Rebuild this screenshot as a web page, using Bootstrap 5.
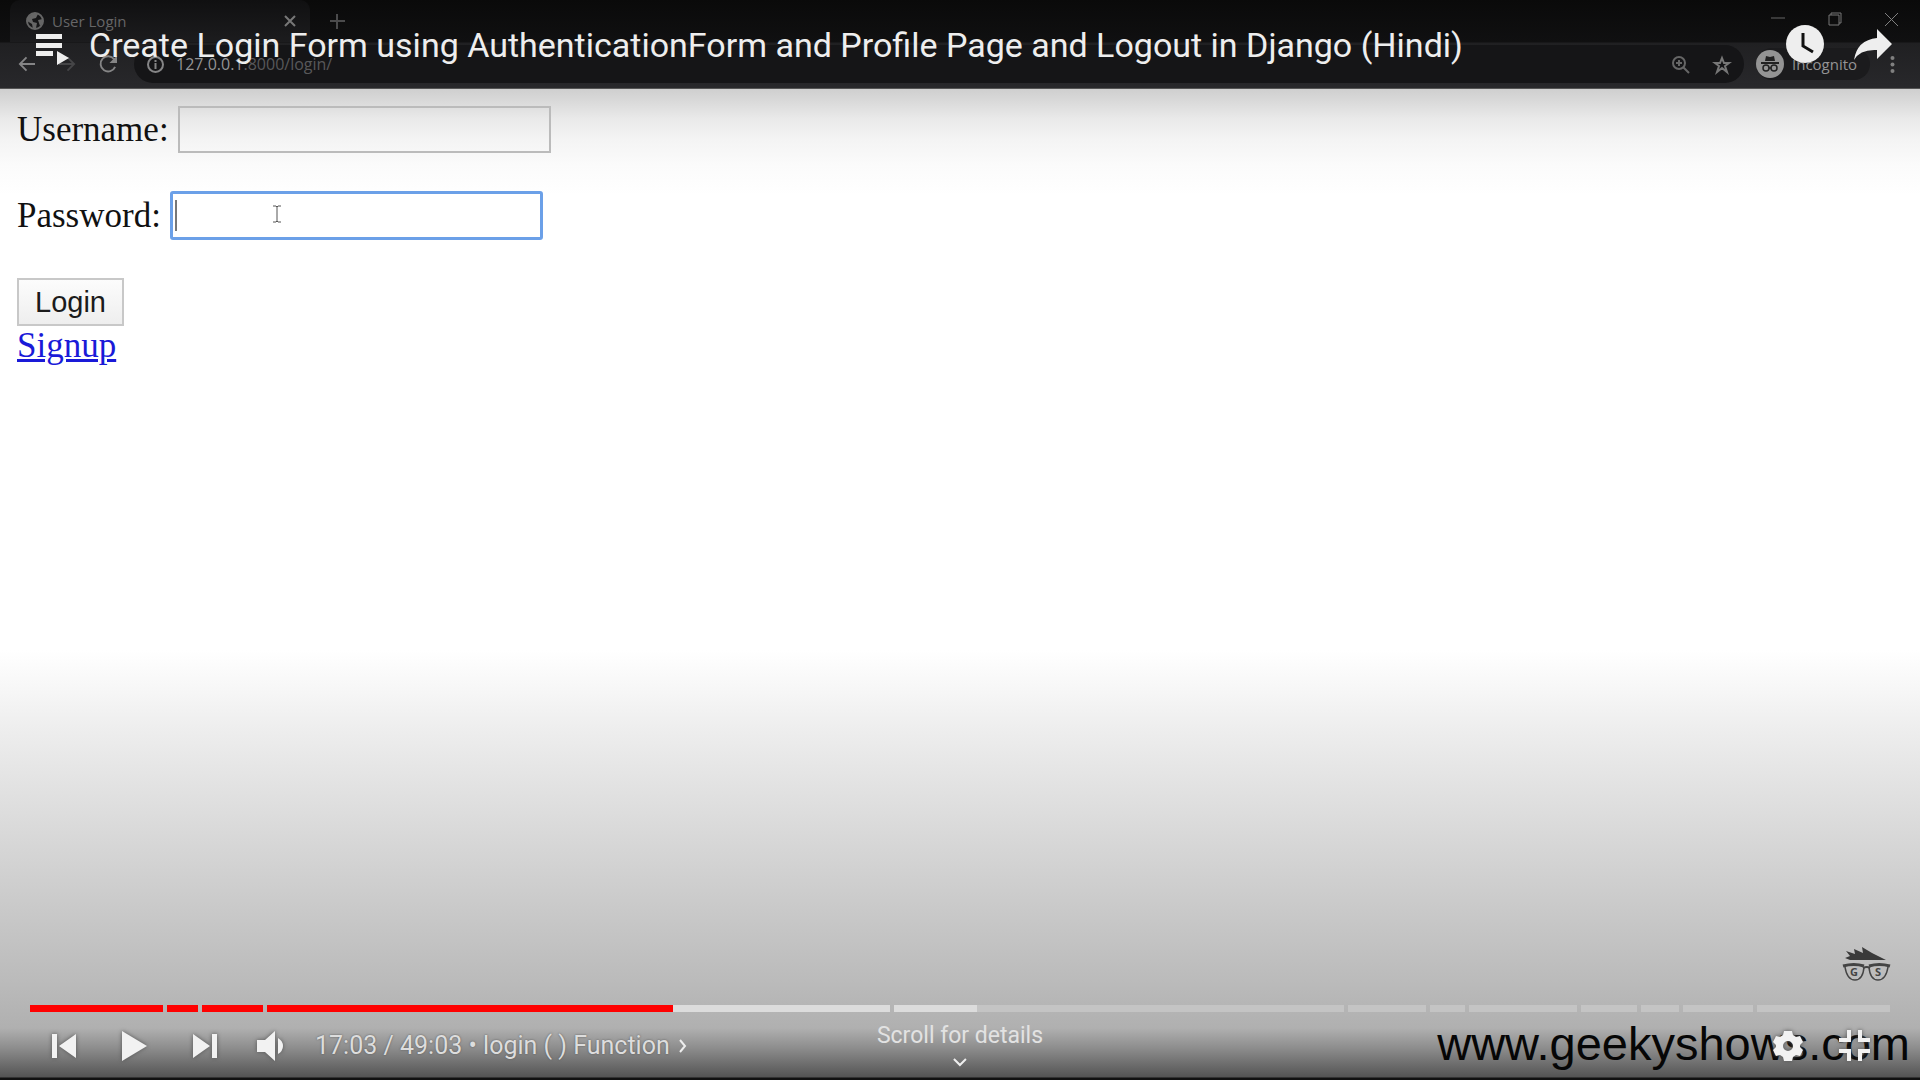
<!DOCTYPE html>
<html lang="en">
<head>
<meta charset="utf-8">
<meta name="viewport" content="width=device-width, initial-scale=1">
<title>Create Login Form using AuthenticationForm</title>
<link href="https://cdn.jsdelivr.net/npm/bootstrap@5.3.0/dist/css/bootstrap.min.css" rel="stylesheet">
<style>
  body { font-family: Roboto, "Liberation Sans", sans-serif; }
  svg { display: block; overflow: visible; }
  button.plain { background: none; border: 0; padding: 0; color: inherit; }

  /* video frame, dimmed at both ends */
  .frame {
    background: linear-gradient(#cecece 88px, #dadada 102px, #e9e9e9 118px, #f4f4f4 140px, #fbfbfb 165px, #fff 195px,
      #fff calc(100vh - 430px), #f6f6f6 calc(100vh - 387px), #eee calc(100vh - 353px), #e4e4e4 calc(100vh - 303px),
      #dadada calc(100vh - 253px), #c9c9c9 calc(100vh - 170px), #bbb calc(100vh - 100px), #b0b0b0 calc(100vh - 52px),
      #8d8d8d calc(100vh - 32px), #545454 calc(100vh - 3px), #111 calc(100vh - 2px));
  }

  /* browser window */
  .chrome { font-family: "Open Sans", "Noto Sans", sans-serif; background: linear-gradient(#0a0a0a, #101011 42px, #202022 43px, #28282b 87px); border-bottom: 1px solid #555; height: 89px; }
  .tabstrip { height: 42px; padding-left: 10px; padding-right: 22px; }
  .tab { width: 300px; height: 42px; padding: 0 15px 0 16px; background: linear-gradient(#101011, #1c1c1e); border-radius: 10px 10px 0 0; color: #666667; font-size: 15px; }
  .window-btns { gap: 43px; padding-bottom: 4px; }
  .toolbar { height: 44px; padding: 0 25px 0 18px; color: #858586; }
  .address { height: 38px; margin-left: 17px; margin-right: 12px; padding: 0 13px; border-radius: 19px; background: #151517; color: #58585a; font-size: 16px; }
  .address b { color: #949495; font-weight: 400; }
  .incog { height: 32px; width: 114px; border-radius: 16px; background: #1b1b1d; font-size: 15px; color: #949495; margin-right: 20px; }

  /* login page */
  .login-page { font-family: "Liberation Serif", serif; font-size: 35px; line-height: 40px; color: #111; padding: 17px 17px; }
  .login-page input { width: 373px; height: 47px; border: 2px solid #bbb; background: transparent; padding: 0 6px; outline: 0; }
  .login-page input.active { background: #fff; border: 3px solid #6ba0e8; border-radius: 3px; height: 49px; caret-color: transparent; }
  .field-row { gap: 9px; margin-bottom: 38px; }
  .login-btn { font: 29px/42px "Liberation Sans", sans-serif; color: #1b1b1b; border: 2px solid #c8c8c8; border-radius: 0; background: linear-gradient(#fcfcfc, #eee); width: 107px; height: 48px; padding: 0; }
  .login-page a { color: #1a1ad8; text-decoration-thickness: 3px; }
  .caret { left: 5px; top: 9px; width: 2px; height: 31px; background: #777; }
  .ibeam { left: 103px; top: 14px; }

  /* player */
  .player-top { color: #eee; padding: 21px 28px 0 35px; }
  .player-title { font-size: 34px; line-height: 48px; font-weight: 400; }
  .share { margin-left: 30px; }
  .player-bottom { color: #eee; padding: 0 30px 3px; }
  .track { gap: 4px; height: 7px; }
  .part { background: #c4c4c4; }
  .part i { height: 100%; }
  .played { background: red; }
  .loaded { background: #dcdcdc; }
  .controls { height: 65px; padding: 2px 20px 0 22px; }
  .buttons { gap: 46px; }
  .corner-btns { gap: 36px; }
  .clock { font-size: 25px; color: #ddd; text-shadow: 0 0 2px #555; }
  .details { font-size: 23px; line-height: 28px; color: #e2e2e2; top: 10px; }
  .shade { filter: drop-shadow(0 0 2px #555); }
  .site-mark { font: 47px/54px "Liberation Sans", sans-serif; color: #060606; right: 10px; bottom: 9px; }
  .logo-mark { right: 30px; bottom: 98px; }
  .logo-mark text { font: 700 11px "Open Sans", sans-serif; fill: #444; }
</style>
<script src="https://cdn.jsdelivr.net/npm/bootstrap@5.3.0/dist/js/bootstrap.bundle.min.js"></script>
</head>
<body>
<main class="frame position-relative vh-100 overflow-hidden">

  <header class="chrome">
    <div class="tabstrip d-flex align-items-center">
      <div class="tab d-flex align-items-center">
        <svg width="18" height="18" viewBox="0 0 18 18"><circle cx="9" cy="9" r="8" fill="none" stroke="#666" stroke-width="2"/><path d="M2 5 6 2h6l-2 4-4 1 1 3 4 1-1 5-3 1-1-5-5-3zM12 8l5-1v4l-3 3z" fill="#666"/></svg>
        <span class="ms-2 flex-grow-1">User Login</span>
        <button class="plain" aria-label="Close tab"><svg width="10" height="10" viewBox="0 0 10 10" stroke="#777" stroke-width="2"><path d="M0 0 10 10M10 0 0 10"/></svg></button>
      </div>
      <button class="plain ms-3 ps-1" aria-label="New tab"><svg width="15" height="15" viewBox="0 0 15 15" stroke="#4b4b4c" stroke-width="2"><path d="M7 0v15M0 7h15"/></svg></button>
      <div class="window-btns d-flex align-items-center ms-auto">
        <button class="plain" aria-label="Minimize"><svg width="14" height="14" viewBox="0 0 14 14" stroke="#666"><path d="M0 6h14"/></svg></button>
        <button class="plain" aria-label="Restore"><svg width="14" height="14" viewBox="0 0 14 14" fill="none" stroke="#777"><path d="M1 3h10v10H1zM3 3V1h10v10h-2"/></svg></button>
        <button class="plain" aria-label="Close"><svg width="13" height="13" viewBox="0 0 13 13" stroke="#808080"><path d="M0 0 13 13M13 0 0 13"/></svg></button>
      </div>
    </div>
    <div class="toolbar d-flex align-items-center">
      <button class="plain" aria-label="Back"><svg width="17" height="16" viewBox="0 0 18 16" fill="none" stroke="#858586" stroke-width="2"><path d="M9 1 2 8l7 7M2 8h16"/></svg></button>
      <button class="plain ms-4" aria-label="Forward"><svg width="17" height="16" viewBox="0 0 18 16" fill="none" stroke="#454547" stroke-width="2"><path d="m9 1 7 7-7 7M16 8H0"/></svg></button>
      <button class="plain ms-4" aria-label="Reload"><svg width="17" height="18" viewBox="0 0 18 18"><path d="M15 4A8 8 0 1 0 16 12" fill="none" stroke="#858586" stroke-width="2"/><path d="M18 0v8h-8z" fill="#858586"/></svg></button>
      <div class="address d-flex align-items-center flex-grow-1">
        <svg width="17" height="17" viewBox="0 0 17 17" fill="none" stroke="#858586" stroke-width="2"><circle cx="8.500" cy="8.500" r="7.500"/><path d="M8.500 7v6M8.500 4v2"/></svg>
        <span class="ms-2 ps-1 flex-grow-1"><b>127.0.0.1</b>:8000/login/</span>
        <svg class="me-4" width="17" height="17" viewBox="0 0 17 17" fill="none" stroke="#666" stroke-width="2"><circle cx="7" cy="7" r="6"/><path d="m11 11 6 6M4 7h6M7 4v6"/></svg>
        <svg width="18" height="17" viewBox="0 0 18 17" fill="none" stroke="#777" stroke-width="2"><path d="m9 2 2 5h5l-4 3 2 6-5-4-5 4 2-6-4-3h5z"/></svg>
      </div>
      <div class="incog d-flex align-items-center gap-2">
        <svg width="28" height="28" viewBox="0 0 28 28"><circle cx="14" cy="14" r="14" fill="#949494"/><path d="M9 11 10 6l4 1 4-1 1 5zM5 12h18v2H5z" fill="#222"/><g fill="none" stroke="#222" stroke-width="1.500"><circle cx="10" cy="18" r="3"/><circle cx="18" cy="18" r="3"/><path d="M13 18h2"/></g></svg>
        <span>Incognito</span>
      </div>
      <button class="plain" aria-label="Menu"><svg width="5" height="17" viewBox="0 0 5 17" fill="#808080"><circle cx="2.500" cy="2" r="2"/><circle cx="2.500" cy="8.500" r="2"/><circle cx="2.500" cy="15" r="2"/></svg></button>
    </div>
  </header>

  <form class="login-page" onsubmit="return false">
    <div class="field-row d-flex align-items-center">
      <label for="user">Username:</label>
      <input id="user" type="text">
    </div>
    <div class="field-row d-flex align-items-center">
      <label for="pass">Password:</label>
      <div class="position-relative d-flex">
        <input id="pass" class="active" type="password">
        <span class="caret position-absolute"></span>
        <svg class="ibeam position-absolute" width="8" height="18" viewBox="0 0 8 18" fill="none" stroke="#555"><path d="M0 1h3l1 1 1-1h3M0 17h3l1-1 1 1h3M4 2v14"/></svg>
      </div>
    </div>
    <button class="login-btn d-block" type="submit">Login</button>
    <a href="#">Signup</a>
  </form>

  <svg class="logo-mark position-absolute" width="47" height="35" viewBox="0 0 47 35"><path d="M2 13h5L2 11l5-2-4-5 9 3-1-5 9 4-1-6 10 6 14 7z" fill="#3a3a3a"/><g fill="none" stroke="#444"><path stroke-width="1.500" d="M2 20Q4 33 12 33 20 33 21 20M26 20Q27 33 35 33 43 33 45 20"/><path stroke-width="3" d="M0 19Q11 16 21 19M26 19Q36 16 47 19"/><path stroke-width="2" d="M20 21q4-2 7 0"/></g><text x="7" y="29">G</text><text x="32" y="29">S</text></svg>
  <div class="site-mark position-absolute">www.geekyshows.com</div>

  <section class="player-top position-absolute top-0 start-0 end-0 d-flex align-items-start">
    <button class="plain mt-2 pt-1" aria-label="Playlist"><svg width="34" height="32" viewBox="0 0 34 32" fill="#eee"><path d="M1 1h26v5H1zM1 10h26v5H1zM1 18h17v5H1zM22 18l12 7-12 7z"/></svg></button>
    <h1 class="player-title mb-0 ms-3 ps-1 flex-grow-1">Create Login Form using AuthenticationForm and Profile Page and Logout in Django (Hindi)</h1>
    <button class="plain mt-1" aria-label="Watch later"><svg width="38" height="38" viewBox="0 0 38 38"><circle cx="19" cy="19" r="19" fill="#eee"/><path d="M17 8v13l10 6" fill="none" stroke="#111" stroke-width="3"/></svg></button>
    <button class="plain share mt-2" aria-label="Share"><svg width="38" height="32" viewBox="0 0 38 32"><path d="M23 0 38 15 23 30V21Q6 20 0 31 3 11 23 9z" fill="#eee"/></svg></button>
  </section>

  <section class="player-bottom position-absolute bottom-0 start-0 end-0">
    <div class="track d-flex" role="progressbar" aria-label="Playback" aria-valuenow="35">
      <div class="part played" style="flex-grow:133"></div>
      <div class="part played" style="flex-grow:31"></div>
      <div class="part played" style="flex-grow:61"></div>
      <div class="part d-flex" style="flex-grow:624"><i class="played" style="width:65.3%"></i><i class="loaded flex-grow-1"></i></div>
      <div class="part d-flex" style="flex-grow:451"><i class="loaded" style="width:18.6%"></i></div>
      <div class="part" style="flex-grow:78"></div>
      <div class="part" style="flex-grow:35"></div>
      <div class="part" style="flex-grow:109"></div>
      <div class="part" style="flex-grow:56"></div>
      <div class="part" style="flex-grow:38"></div>
      <div class="part" style="flex-grow:70"></div>
      <div class="part" style="flex-grow:133"></div>
    </div>
    <div class="controls position-relative d-flex align-items-center">
      <div class="buttons d-flex align-items-center">
        <button class="plain shade" aria-label="Previous"><svg width="24" height="24" viewBox="0 0 24 24" fill="#f2f2f2"><path d="M0 0h5v24H0zM24 0v24L7 12z"/></svg></button>
        <button class="plain shade" aria-label="Play"><svg width="25" height="30" viewBox="0 0 25 30" fill="#f2f2f2"><path d="M0 0 25 15 0 30z"/></svg></button>
        <button class="plain shade" aria-label="Next"><svg width="24" height="24" viewBox="0 0 24 24" fill="#f2f2f2"><path d="M19 0h5v24h-5zM0 0v24l17-12z"/></svg></button>
      </div>
      <button class="plain shade ms-4 ps-3" aria-label="Volume"><svg width="26" height="30" viewBox="0 0 26 30" fill="#f2f2f2"><path d="M0 9h8L18 0v30L8 21H0zM21 7q5 3 5 8t-5 8z"/></svg></button>
      <span class="clock ms-4 ps-2">17:03 / 49:03 • <a class="text-reset text-decoration-none" href="#">login ( ) Function</a></span>
      <svg class="ms-2" width="9" height="14" viewBox="0 0 9 14" fill="none" stroke="#eee" stroke-width="2"><path d="m2 1 5 6-5 6"/></svg>
      <div class="details position-absolute start-50 translate-middle-x text-center">Scroll for details
        <svg class="mx-auto mt-2" width="15" height="9" viewBox="0 0 15 9" fill="none" stroke="#eee" stroke-width="2"><path d="m1 1 6 6 6-6"/></svg>
      </div>
      <div class="corner-btns d-flex align-items-center ms-auto">
        <button class="plain shade" aria-label="Settings"><svg width="30" height="30" viewBox="0 0 30 30"><path fill="#f2f2f2" fill-rule="evenodd" d="M11 0h8l1 4 3 2 4-1 3 6-3 3v2l3 3-3 6-4-1-3 2-1 4h-8l-1-4-3-2-4 1-3-6 3-3v-2l-3-3 3-6 4 1 3-2zM15 10a5 5 0 1 0 0 10 5 5 0 0 0 0-10z"/></svg></button>
        <button class="plain shade" aria-label="Exit full screen"><svg width="31" height="31" viewBox="0 0 31 31" fill="none" stroke="#f2f2f2" stroke-width="4"><path d="M10 0v10H0M21 0v10h10M10 31V21H0M21 31V21h10"/></svg></button>
      </div>
    </div>
  </section>
</main>
</body>
</html>
